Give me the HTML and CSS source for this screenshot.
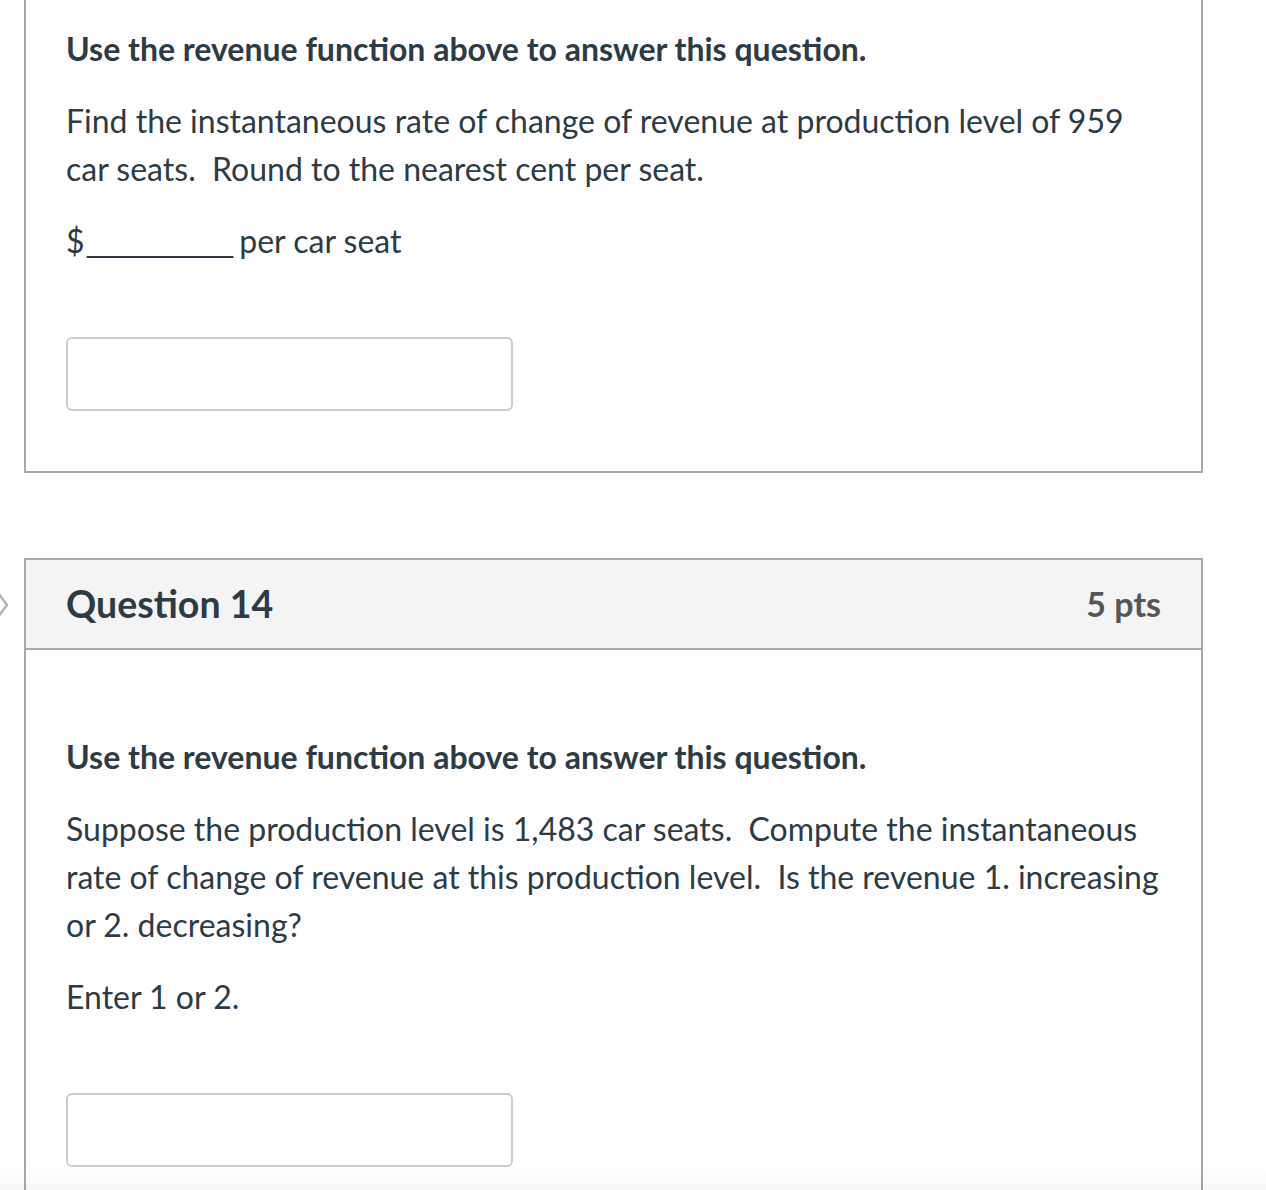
FILE: index.html
```html
<!DOCTYPE html>
<html lang="en">
<head>
<meta charset="utf-8">
<title>Quiz</title>
<link rel="stylesheet" href="styles.css">
</head>
<body>
<div class="page">
  <div class="card card-top">
    <div class="content">
      <p class="lead">Use the revenue function above to answer this question.</p>
      <p>Find the instantaneous rate of change of revenue at production level of 959 car seats.&nbsp; Round to the nearest cent per seat.</p>
      <p>$<span class="blank">_____________</span> per car seat</p>
      <div class="answer"></div>
    </div>
  </div>

  <div class="card card-q">
    <svg class="flag" width="10" height="30" viewBox="0 0 10 30" aria-hidden="true">
      <path d="M-2 3 L7 15 L-2 27" fill="none" stroke="#aab6c3" stroke-width="2.5" stroke-linejoin="round" stroke-linecap="round"/>
    </svg>
    <div class="header">
      <span class="qname">Question 14</span>
      <span class="pts">5 pts</span>
    </div>
    <div class="content content-q">
      <p class="lead">Use the revenue function above to answer this question.</p>
      <p>Suppose the production level is 1,483 car seats.&nbsp; Compute the instantaneous rate of change of revenue at this production level.&nbsp; Is the revenue 1. increasing or 2. decreasing?</p>
      <p>Enter 1 or 2.</p>
      <div class="answer"></div>
    </div>
  </div>
</div>
<div class="fade"></div>
</body>
</html>
```

FILE: styles.css
```css
html, body {
  margin: 0;
  padding: 0;
  background: #ffffff;
}

body {
  font-family: Lato, "Open Sans", "Liberation Sans", sans-serif;
  color: #2d3b45;
  font-size: 32px;
  line-height: 48px;
  overflow: hidden;
  height: 1190px;
}

.page {
  position: relative;
  padding-left: 24px;
  width: 1179px;
}

.card {
  border: 2px solid #a8a8a8;
  background: #ffffff;
  position: relative;
}

.card-top {
  border-top: none;
}

.card-q {
  margin-top: 85px;
}

.content {
  padding: 25px 40px 60px 40px;
}

.content-q {
  padding-top: 83px;
}

.content p {
  margin: 0 0 24px 0;
}

.content .lead {
  font-weight: 700;
}

.blank {
  letter-spacing: -3.5px;
  margin-left: 1px;
}

.answer {
  margin-top: 72px;
  width: 443px;
  height: 70px;
  border: 2px solid #cccccc;
  border-radius: 6px;
  background: #ffffff;
}

.header {
  height: 88px;
  background: #f4f4f4;
  border-bottom: 2px solid #a8a8a8;
  display: flex;
  align-items: center;
  justify-content: space-between;
  padding: 0 40px;
}

.qname {
  font-weight: 700;
  font-size: 37.5px;
  line-height: 44px;
  color: #2d3b45;
}

.pts {
  font-weight: 700;
  font-size: 34px;
  line-height: 44px;
  color: #565656;
}

.flag {
  position: absolute;
  left: -26px;
  top: 30px;
}

.fade {
  position: absolute;
  left: 0;
  right: 0;
  top: 1165px;
  height: 25px;
  background: linear-gradient(to bottom, rgba(0,0,0,0), rgba(0,0,0,0.03));
  pointer-events: none;
}
```
